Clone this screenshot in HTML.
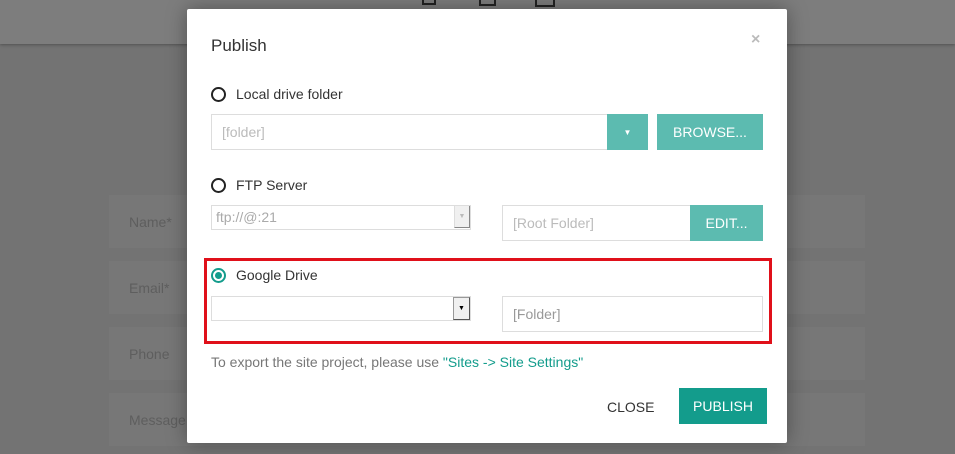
<!DOCTYPE html>
<html><head><style>
*{box-sizing:border-box;margin:0;padding:0}
body{width:955px;height:454px;overflow:hidden;background:#737373;font-family:"Liberation Sans",sans-serif;position:relative}
.top{position:absolute;left:0;top:0;width:955px;height:44px;background:#7d7d7d;box-shadow:0 1px 3px rgba(0,0,0,.3)}
.dev{position:absolute;top:0;border:2px solid #222;border-top:none}
.fld{position:absolute;left:109px;width:756px;height:53px;background:#777;color:#5e5e5e;font-size:14px;padding:19px 20px}
.dlg{position:absolute;left:187px;top:9px;width:600px;height:434px;background:#fff;border-radius:2px;box-shadow:0 0 20px rgba(0,0,0,.35)}
.a{position:absolute}
.t{font-size:14px;color:#333}
.radio{position:absolute;width:15px;height:15px;border:2px solid #222;border-radius:50%}
.inp{position:absolute;border:1px solid #ddd;background:#fff;color:#bbb;font-size:14px;padding-left:10px}
.btn{position:absolute;background:#5cbbb0;color:#fff;font-size:14px;text-align:center}
</style></head><body>
<div class="top"></div>
<div class="dev" style="left:422px;width:14px;height:5px"></div>
<div class="dev" style="left:479px;width:17px;height:6px"></div>
<div class="dev" style="left:535px;width:20px;height:7px"></div>
<div class="fld" style="top:195px">Name*</div>
<div class="fld" style="top:261px">Email*</div>
<div class="fld" style="top:327px">Phone</div>
<div class="fld" style="top:393px">Message</div>
<div class="dlg">
 <div class="a" style="left:24px;top:27px;font-size:17px;color:#333">Publish</div>
 <div class="a" style="left:564px;top:22px;font-size:16px;color:#bbb;font-weight:bold">×</div>
 <div class="radio" style="left:24px;top:78px"></div>
 <div class="a t" style="left:49px;top:77px">Local drive folder</div>
 <div class="inp" style="left:24px;top:105px;width:398px;height:36px;line-height:34px">[folder]</div>
 <div class="btn" style="left:420px;top:105px;width:41px;height:36px;font-size:8px;line-height:38px">▼</div>
 <div class="btn" style="left:470px;top:105px;width:106px;height:36px;line-height:36px">BROWSE...</div>
 <div class="radio" style="left:24px;top:169px"></div>
 <div class="a t" style="left:49px;top:168px">FTP Server</div>
 <div class="inp" style="left:24px;top:196px;width:260px;height:25px;line-height:23px;padding-left:4px;color:#aaa">ftp://@:21</div>
 <div class="a" style="left:267px;top:197px;width:16px;height:22px;background:#f0f0f0;border-left:1px solid #ddd;border-right:1px solid #888;border-bottom:1px solid #888;font-size:7px;color:#bbb;text-align:center;line-height:22px">▼</div>
 <div class="inp" style="left:315px;top:196px;width:190px;height:36px;line-height:34px">[Root Folder]</div>
 <div class="btn" style="left:503px;top:196px;width:73px;height:36px;line-height:36px">EDIT...</div>
 <div class="a" style="left:17px;top:249px;width:568px;height:86px;border:3px solid #e0101a"></div>
 <div class="radio" style="left:24px;top:259px;border-color:#139c8c"><div style="position:absolute;left:2px;top:2px;width:7px;height:7px;border-radius:50%;background:#139c8c"></div></div>
 <div class="a t" style="left:49px;top:258px">Google Drive</div>
 <div class="inp" style="left:24px;top:287px;width:260px;height:25px"></div>
 <div class="a" style="left:266px;top:288px;width:17px;height:23px;background:#f0f0f0;border:1px solid #999;border-right-color:#555;border-bottom-color:#555;font-size:7px;color:#000;text-align:center;line-height:21px">▼</div>
 <div class="inp" style="left:315px;top:287px;width:261px;height:36px;line-height:34px;color:#999">[Folder]</div>
 <div class="a" style="left:24px;top:345px;font-size:14px;color:#777">To export the site project, please use <span style="color:#139c8c">"Sites -&gt; Site Settings"</span></div>
 <div class="a t" style="left:420px;top:390px">CLOSE</div>
 <div class="btn" style="left:492px;top:379px;width:88px;height:36px;line-height:36px;background:#139c8c">PUBLISH</div>
</div>
</body></html>
